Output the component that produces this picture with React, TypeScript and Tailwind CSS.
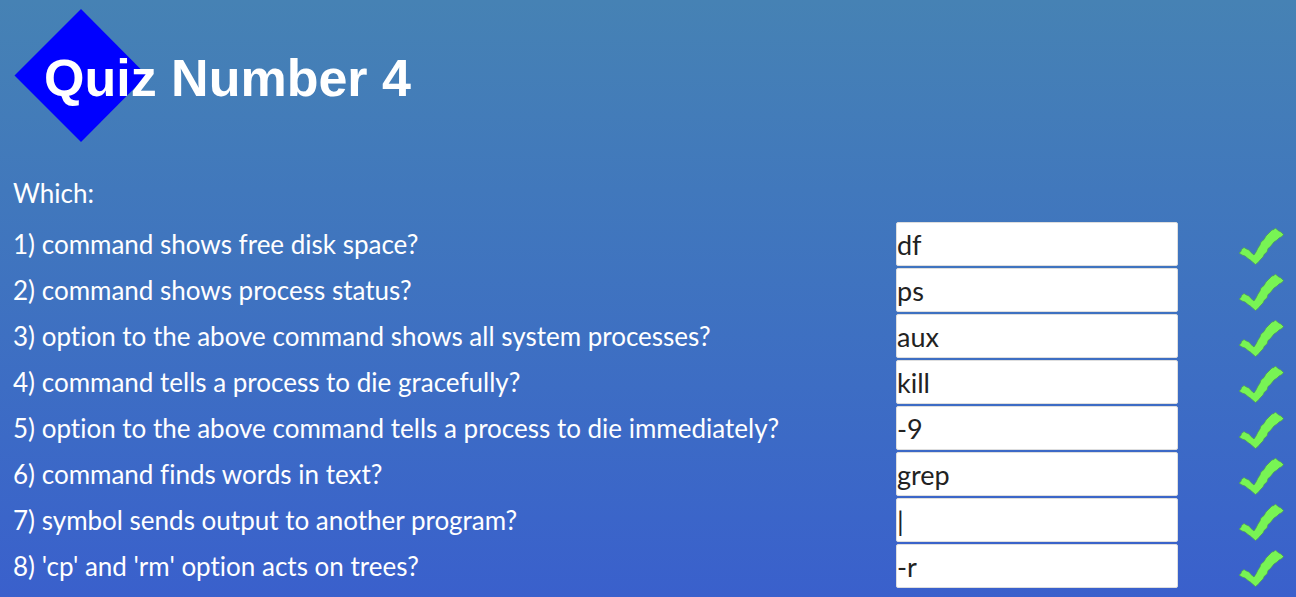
import React from "react";

const questions = [
  { text: "command shows free disk space?", answer: "df" },
  { text: "command shows process status?", answer: "ps" },
  { text: "option to the above command shows all system processes?", answer: "aux" },
  { text: "command tells a process to die gracefully?", answer: "kill" },
  { text: "option to the above command tells a process to die immediately?", answer: "-9" },
  { text: "command finds words in text?", answer: "grep" },
  { text: "symbol sends output to another program?", answer: "|" },
  { text: "'cp' and 'rm' option acts on trees?", answer: "-r" },
];

function CheckMark() {
  return (
    <svg viewBox="0 0 48 44" className="ml-auto block h-11 w-12" role="img" aria-label="Correct">
      <path
        d="M3 30 L5 28.500 L5.500 26.500 L8 24.500 L10.500 26 L13 27 L15 29.500 L18 32 L20 29 L22 25 L24 22 L25 19 L28 16.500 L30 13 L33 10 L36 7 L38 6.500 L39.500 5 L42 7.500 L45 9 L47.500 11.500 L46 13.500 L43 15 L41 17 L38 19 L36 21.500 L34 24 L32 25.500 L31 29 L28.500 31 L27 34 L24.500 36.500 L22 39.500 L19.500 41.500 L17 39.500 L15 37.500 L12 35.500 L9 33 L6 32 Z"
        fill="#78f454"
        stroke="#4d9a58"
        strokeWidth="0.700"
        strokeLinejoin="round"
      />
    </svg>
  );
}

export default function App() {
  return (
    <main className="h-screen overflow-hidden bg-linear-to-b from-[#4682b4] to-[#3a60cc] pt-2 pr-3 pl-[13px] font-['Lato',sans-serif] text-[26px] leading-[34px] text-white [font-variant-ligatures:none]">
      <header className="relative flex h-[136px] items-center pt-1 pl-[31px]">
        <svg viewBox="0 0 136 136" className="absolute top-0 left-0 h-[136px] w-[136px]" aria-hidden="true">
          <path d="M68 1 L134 67.500 L68 134 L1.500 67.500 Z" fill="#0000ff" />
        </svg>
        <h1 className="relative font-['Liberation_Sans',sans-serif] text-[52px] leading-[60px] font-bold whitespace-nowrap">
          Quiz Number 4
        </h1>
      </header>
      <p className="mt-8">Which:</p>
      <table className="mt-[11px] w-full border-separate border-spacing-0">
        <tbody>
          {questions.map((q, i) => (
            <tr key={q.text}>
              <td className="h-[46px] p-0 align-middle">
                <label htmlFor={`answer-${i + 1}`}>
                  {i + 1}) {q.text}
                </label>
              </td>
              <td className="w-[282px] p-0 align-middle">
                <input
                  id={`answer-${i + 1}`}
                  type="text"
                  defaultValue={q.answer}
                  className="block h-11 w-full rounded-xs border border-[#dedede] bg-white px-0 text-[27px] text-[#222222] outline-none"
                />
              </td>
              <td className="w-[106px] p-0 align-bottom">
                <CheckMark />
              </td>
            </tr>
          ))}
        </tbody>
      </table>
    </main>
  );
}
